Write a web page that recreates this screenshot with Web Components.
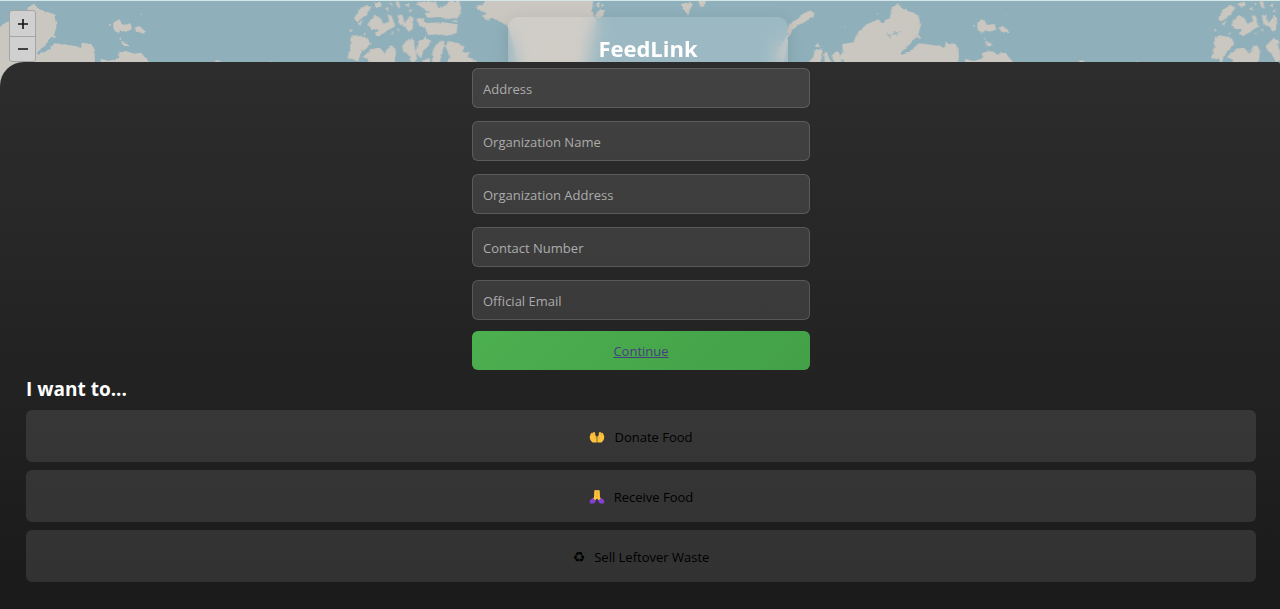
<!DOCTYPE html>
<html lang="en">
<head>
<meta charset="utf-8">
<meta name="viewport" content="width=device-width, initial-scale=1">
<title>FeedLink</title>
<style>
  body { margin: 0; background: #1a1a1a; font-family: "Open Sans", "Noto Sans", sans-serif; font-size: 13px; }
</style>
</head>
<body>
<feed-app></feed-app>

<script>
const define = (name, html) => {
  const template = document.createElement('template');
  template.innerHTML = html;
  customElements.define(name, class extends HTMLElement {
    constructor() {
      super();
      this.attachShadow({ mode: 'open' }).append(template.content.cloneNode(true));
    }
    connectedCallback() {
      const label = this.getAttribute('label');
      const input = this.shadowRoot.querySelector('input');
      if (input && label) {
        input.placeholder = label;
        input.type = this.getAttribute('type') || 'text';
        input.setAttribute('aria-label', label);
      }
    }
  });
};

define('world-map', `
  <style>
    :host { display: block; background: #8fb0bb; }
    svg { display: block; width: 100%; height: 100%; }
  </style>
  <svg aria-hidden="true" fill="#cac6c0">
    <defs>
      <filter id="coast" x="-5%" y="-5%" width="110%" height="110%" color-interpolation-filters="sRGB">
        <feTurbulence type="fractalNoise" baseFrequency="0.25" numOctaves="2" seed="4" result="n"/>
        <feDisplacementMap in="SourceGraphic" in2="n" scale="3" xChannelSelector="R" yChannelSelector="G"/>
      </filter>
      <g id="eurasia">
        <path d="M400 190L410 150L440 104L445 75L470 55L495 35L512 28L521 38L516 50L495 62L475 72L458 88L445 110L430 190Z"/>
        <path d="M122 10L150 2L158 10L148 30L145 45L130 28ZM175 0H198L190 18L180 14Z"/>
        <path d="M498 190L520 170L524 148L545 145L546 165L540 190ZM555 190L552 160L560 150L568 175L582 190ZM575 165L590 150L600 160L607 190H585Z"/>
        <path d="M605 270L612 178L598 168L610 155L605 130L640 124L652 95L680 70L715 55L725 65L750 50L755 20L775 8L790 25L835 40L842 75L835 100L805 135L783 155L786 162L820 145L835 127L860 130L900 135L915 142L917 125L945 128L956 145L958 270Z"/>
        <path d="M1012 65L1030 55L1042 72L1064 68L1068 85L1050 92L1035 88L1025 98L1012 85ZM1075 80L1090 75L1110 92L1100 97L1085 92ZM1035 120L1050 122L1058 135L1042 136Z"/>
        <path d="M972 190L976 174L1000 180L1030 172L1026 156L1050 150L1075 158L1095 155L1112 175L1125 190ZM1310 190Q1325 166 1340 190ZM1484 190L1490 180L1500 190Z"/>
        <circle cx="532" cy="134" r="5"/><circle cx="834" cy="108" r="6"/><circle cx="1033" cy="113" r="3"/><circle cx="1096" cy="40" r="2"/><circle cx="1002" cy="72" r="3"/><circle cx="715" cy="40" r="2"/><circle cx="615" cy="78" r="2"/>
        <path d="M740 95L752 112M748 104L780 92M764 90L772 104" fill="none" stroke="#8fb0bb" stroke-width="3"/>
      </g>
      <g id="arctic">
        <path d="M62 108L78 103L112 110L124 128L104 146L92 158L84 182L70 174L52 172L60 142Z"/>
        <path d="M98 168L125 143L150 140L165 158L178 135L190 133L198 150L193 190H105L120 178Z"/>
        <path d="M72 52L88 25L110 12L124 18L112 36L96 52L80 62ZM82 68L98 58L92 74ZM118 60L135 42L152 52L160 68L178 62L172 40L185 44L196 76L176 86L150 104L134 98L144 84L124 84L112 72ZM130 8L150 2L156 12L142 20Z"/>
        <path d="M202 44L216 40L224 66L240 44L250 52L248 84L236 92L224 76L210 72ZM196 2L206 0L212 24L202 18ZM200 86L206 82L208 92Z"/>
        <path d="M216 134L238 112L252 116L254 142L262 176L246 186L234 158L220 150ZM264 122L284 108L302 116L296 134L280 150L272 172L256 152ZM278 178L298 172V190H278Z"/>
        <path d="M256 6L290 0L318 4L326 22L350 10L358 0H388L394 24L386 48L360 54L330 48L292 50L284 36L300 34L280 22Z"/>
        <path d="M258 54L280 52L288 66L340 64L382 70L380 96L352 104L326 100L294 102L288 84L268 72ZM360 60L380 58L384 64Z"/>
        <path d="M306 190L308 148L326 122L344 120L338 150L328 190ZM346 136L356 120L384 126L404 140L396 152L420 154L412 166L440 180L436 190H348L360 168Z"/>
        <path d="M436 15L458 10L476 -9H790L786 34L800 60L792 90L784 120L766 240H565L556 150L544 104L534 78L512 62L484 50L476 60L456 46L470 38L444 24Z"/>
        <path d="M796 14L804 4L810 18ZM794 44L808 26L822 30L820 44L806 52ZM814 6L822 12L818 20Z"/>
        <path d="M60 86L68 84L66 92ZM100 98L108 94L106 104ZM166 22L174 18L176 30ZM182 96L190 94L188 102ZM226 10L238 8L236 20ZM236 28L246 24L244 34ZM176 8L184 4L188 14Z"/>
      </g>
    </defs>
    <g filter="url(#coast)">
      <use href="#eurasia" transform="translate(-224 0) scale(.3333)"/>
      <use href="#arctic" transform="translate(330 0) scale(.3333)"/>
      <use href="#eurasia" transform="translate(640 0) scale(.3333)"/>
      <use href="#arctic" transform="translate(1194 0) scale(.3333)"/>
    </g>
  </svg>
`);

define('zoom-control', `
  <style>
    :host { display: flex; flex-direction: column; box-sizing: border-box; width: 27px;
      border: 1px solid #a3a5a5; border-radius: 3px; background: #d0d0d0; overflow: hidden; }
    button { display: flex; align-items: center; justify-content: center; height: 25px; padding: 0; border: 0; background: none; color: #111; }
    button + button { border-top: 1px solid #a5a5a5; }
    svg { width: 12px; height: 12px; stroke: currentColor; stroke-width: 1.6; }
  </style>
  <button type="button" aria-label="Zoom in"><svg viewBox="0 0 12 12"><path d="M1 6H11M6 1V11"/></svg></button>
  <button type="button" aria-label="Zoom out"><svg viewBox="0 0 12 12"><path d="M1 6H11"/></svg></button>
`);

define('brand-card', `
  <style>
    :host { display: block; box-sizing: border-box; width: 280px; height: 80px; padding-top: 16px;
      border-radius: 10px; background: rgba(255,255,255,.12); backdrop-filter: blur(8px);
      box-shadow: 0 4px 16px rgba(0,0,0,.12); text-align: center; }
    h1 { margin: 0; color: #fff; font-weight: bold; font-size: 22px; line-height: 30px; }
  </style>
  <h1><slot></slot></h1>
`);

define('form-field', `
  <style>
    :host { display: block; }
    input { display: block; box-sizing: border-box; width: 100%; height: 40px; padding: 2px 10px 0; outline: 0;
      border: 1px solid rgba(255,255,255,.15); border-radius: 6px; background: rgba(255,255,255,.1);
      color: #fff; font: inherit; }
    input::placeholder { color: #acacac; opacity: 1; }
  </style>
  <input>
`);

define('primary-action', `
  <style>
    :host { display: block; }
    a { display: block; box-sizing: border-box; height: 39px; padding-top: 1px; border-radius: 6px;
      background: linear-gradient(135deg, #4caf50, #43a047);
      color: #47407f; line-height: 39px; text-align: center; text-decoration: underline; }
  </style>
  <a href="#options"><slot></slot></a>
`);

define('option-button', `
  <style>
    :host { display: block; }
    button { display: flex; align-items: center; justify-content: center; gap: 9px; width: 100%; height: 52px;
      padding: 1px 0 0; border: 0; border-radius: 6px; background: rgba(255,255,255,.1); color: #000; font: inherit; }
    ::slotted(svg) { display: block; width: 16px; height: 16px; }
    ::slotted(span) { font: bold 14px/16px "DejaVu Sans", sans-serif; }
  </style>
  <button type="button"><slot name="icon"></slot><span><slot></slot></span></button>
`);

define('feed-app', `
  <style>
    :host { display: flex; flex-direction: column; min-height: 100vh; overflow: hidden; }
    header { display: grid; grid-template-columns: 1fr auto 1fr; align-items: start; height: 86px; margin-bottom: -24px; }
    world-map { grid-area: 1 / 1 / 2 / 4; height: 86px; box-sizing: border-box; border-top: 1px solid #d3e6e8; }
    zoom-control { grid-area: 1 / 1; margin: 10px 0 0 9px; z-index: 1; }
    brand-card { grid-area: 1 / 2; margin: 17px 0 0 16px; z-index: 1; }
    main { flex: 1; position: relative; z-index: 2; box-sizing: border-box; padding: 6px 24px 24px 26px;
      border-radius: 24px 2px 0 0; background: linear-gradient(#2d2d2d, #1a1a1a); }
    form { display: grid; gap: 13px; width: 338px; max-width: 100%; margin: 0 auto; }
    primary-action { width: 338px; max-width: 100%; margin: 11px auto 0; }
    h2 { margin: 5px 0 7px; color: #fff; font-size: 19px; line-height: 28px; }
    .options { display: grid; gap: 8px; }
  </style>
  <header>
    <world-map></world-map>
    <zoom-control></zoom-control>
    <brand-card>FeedLink</brand-card>
  </header>
  <main>
    <form>
      <form-field label="Address"></form-field>
      <form-field label="Organization Name"></form-field>
      <form-field label="Organization Address"></form-field>
      <form-field label="Contact Number" type="tel"></form-field>
      <form-field label="Official Email" type="email"></form-field>
    </form>
    <primary-action>Continue</primary-action>
    <h2 id="options">I want to...</h2>
    <div class="options">
      <option-button>
        <svg slot="icon" viewBox="0 0 16 16" aria-hidden="true">
          <path d="M7.7 13.6H3.6C1.6 12 .4 9.6.8 7.2L1.9 4.6Q2.7 3.5 3.4 4L4.7 3.1Q5.8 2.8 6.1 3.9L6.4 6.6Q7.6 7 7.7 8.6ZM8.3 13.6H12.4C14.4 12 15.6 9.6 15.2 7.2L14.1 4.6Q13.3 3.5 12.6 4L11.3 3.1Q10.2 2.8 9.9 3.9L9.6 6.6Q8.4 7 8.3 8.6Z" fill="#fcc23a"/>
          <path d="M3.5 4L3 6.5M4.8 3.4L4.6 6M12.5 4L13 6.5M11.2 3.4L11.4 6M7.4 7.5Q5.3 8 5.7 10M8.6 7.5Q10.7 8 10.3 10" fill="none" stroke="#e79a2c" stroke-width=".5"/>
        </svg>Donate Food</option-button>
      <option-button>
        <svg slot="icon" viewBox="0 0 16 16" aria-hidden="true">
          <path d="M5.3 1.8Q5.6 1 6.6 1L8 1.2L9.4 1Q10.4 1 10.7 1.8L11 8L12.2 10L9.8 11.6L8 9.6L6.2 11.6L3.8 10L5 8Z" fill="#fcc23a"/>
          <path d="M8 1.4V8" stroke="#e79a2c" stroke-width=".5"/>
          <path d="M4.2 8.9Q5 10.8 6.9 11.6Q6.3 13.6 5 14.6H1.4Q.3 13.8.8 11.8Q2 9.6 4.2 8.9ZM11.8 8.9Q11 10.8 9.1 11.6Q9.7 13.6 11 14.6H14.6Q15.7 13.8 15.2 11.8Q14 9.6 11.8 8.9Z" fill="#843fd5"/>
        </svg>Receive Food</option-button>
      <option-button><span slot="icon" aria-hidden="true">♻</span>Sell Leftover Waste</option-button>
    </div>
  </main>
`);
</script>
</body>
</html>
